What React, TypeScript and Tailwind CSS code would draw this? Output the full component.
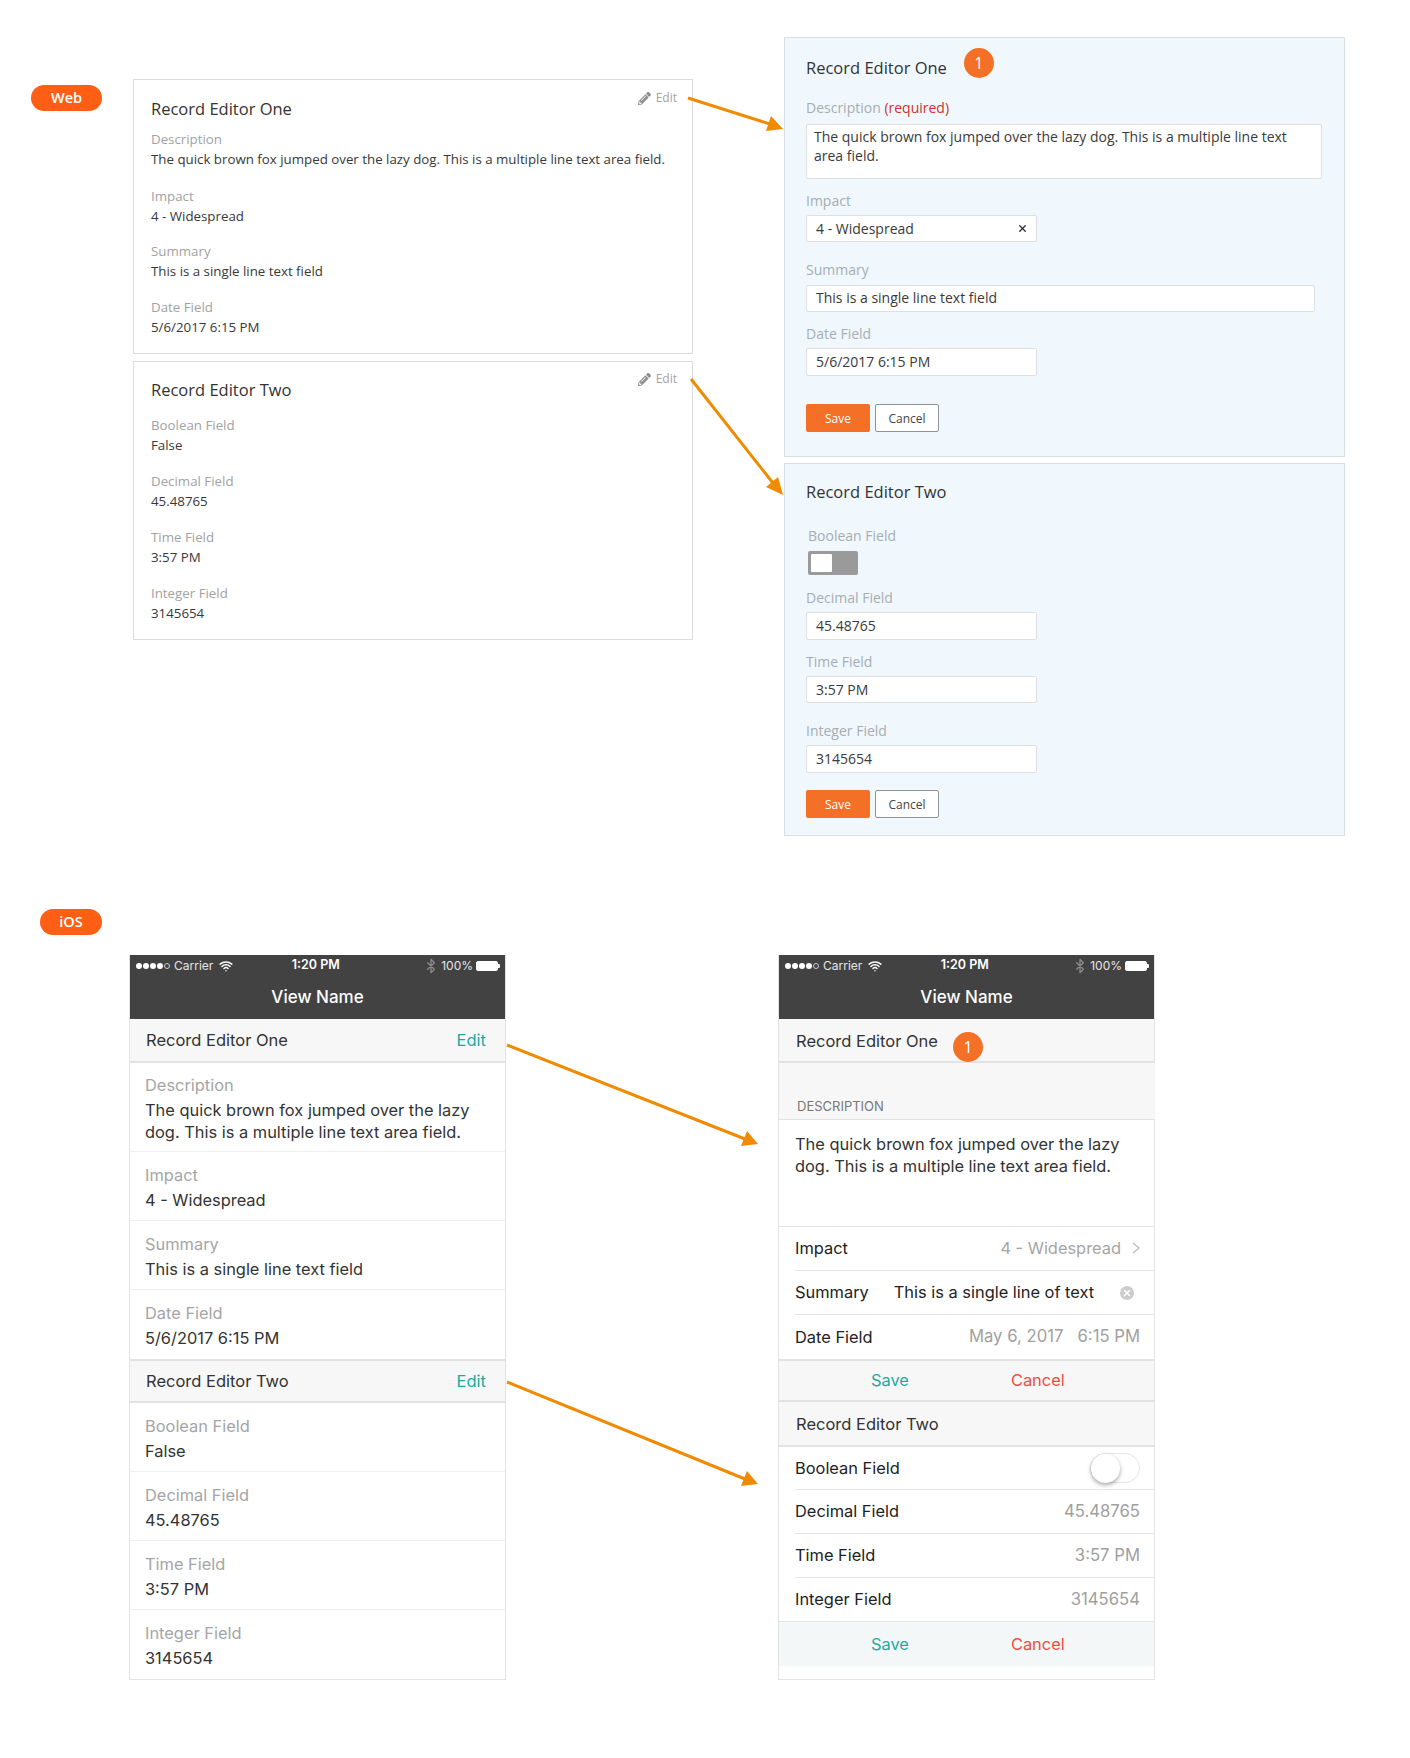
import { Wifi, Bluetooth, X } from 'lucide-react';
import { FaPencilAlt } from 'react-icons/fa';
import { clsx } from 'clsx';

const webFont = "font-['Open_Sans','Liberation_Sans',sans-serif]";
const iosFont = "font-['Inter','Liberation_Sans',sans-serif]";

function Badge({ label, className }: { label: string; className?: string }) {
  return (
    <div
      className={clsx(
        'flex h-[26px] items-center justify-center rounded-full bg-[#ff5f15] text-[14.5px] font-semibold text-white',
        className
      )}
    >
      {label}
    </div>
  );
}

function Count({ className }: { className?: string }) {
  return (
    <div
      className={clsx(
        'flex items-center justify-center rounded-full bg-[#f37026] text-[16px] text-white',
        className
      )}
    >
      1
    </div>
  );
}

function EditLink({ className }: { className?: string }) {
  return (
    <div className={clsx('absolute right-[15px] flex items-center gap-[5px] text-[12px] leading-4 text-[#a3a3a3]', className)}>
      <FaPencilAlt className="h-[13px] w-[13px] text-[#8f8f8f]" />
      Edit
    </div>
  );
}

function ReadField({ label, value, className }: { label: string; value: string; className?: string }) {
  return (
    <div className={className}>
      <div className="text-[13.3px] leading-5 text-[#a2a2a2]">{label}</div>
      <div className="text-[13.3px] leading-5 text-[#383838]">{value}</div>
    </div>
  );
}

function ReadCard({ title, children, className }: { title: string; children: React.ReactNode; className?: string }) {
  return (
    <div className={clsx('relative border border-[#dcdcdc] px-[17px]', className)}>
      <div className="text-[16.5px] leading-7 text-[#333]">{title}</div>
      {children}
    </div>
  );
}

function Input({ value, className, clear }: { value: string; className?: string; clear?: boolean }) {
  return (
    <div
      className={clsx(
        'flex items-center justify-between rounded-[2px] border border-[#dfdfdf] bg-white pl-[9px] pr-[8px] text-[14px] text-[#3a3a3a]',
        className
      )}
    >
      {value}
      {clear && <X className="h-[11px] w-[11px] text-[#333]" strokeWidth={3} />}
    </div>
  );
}

function FormLabel({ children, className }: { children: React.ReactNode; className?: string }) {
  return <div className={clsx('text-[14px] leading-5 text-[#a6adb2]', className)}>{children}</div>;
}

function FormButtons({ className }: { className?: string }) {
  return (
    <div className={clsx('flex h-7 gap-[5px] text-[12px]', className)}>
      <div className="flex w-[64px] items-center justify-center rounded-[2px] bg-[#f37026] pt-[2px] text-white">Save</div>
      <div className="flex w-[64px] items-center justify-center rounded-[2px] border border-[#8f9499] bg-white pt-[2px] text-[#444]">Cancel</div>
    </div>
  );
}

function StatusBar() {
  return (
    <div className="relative flex h-[21px] items-center pl-[6px] pr-[5px] text-[12px] text-[#e6e6e6]">
      <div className="flex items-center gap-[1px]">
        <span className="h-[6px] w-[6px] rounded-full bg-white" />
        <span className="h-[6px] w-[6px] rounded-full bg-white" />
        <span className="h-[6px] w-[6px] rounded-full bg-white" />
        <span className="h-[6px] w-[6px] rounded-full bg-white" />
        <span className="h-[6px] w-[6px] rounded-full border border-[#ccc]" />
      </div>
      <span className="ml-[4px]">Carrier</span>
      <Wifi className="ml-[6px] h-[14px] w-[14px] text-white" strokeWidth={2.5} />
      <span className="flex-1 pr-[25px] text-center text-[12.5px] font-semibold text-white">1:20 PM</span>
      <Bluetooth className="h-4 w-4 text-[#8a8a8a]" strokeWidth={2} />
      <span className="ml-[2px]">100%</span>
      <div className="ml-[3px] h-[10px] w-[22px] rounded-[2px] border border-white bg-white" />
      <div className="h-[4px] w-[2px] rounded-r-[1px] bg-white" />
    </div>
  );
}

function NavBar() {
  return (
    <div className="h-[64px] bg-[#424242]">
      <StatusBar />
      <div className="pt-[7px] text-center text-[17px] font-medium leading-7 text-white">View Name</div>
    </div>
  );
}

function ReadRow({ label, value, last }: { label: string; value: string; last?: boolean }) {
  return (
    <div className={clsx('h-[69px] pl-[15px] pt-[11px]', !last && 'border-b border-[#efefef]')}>
      <div className="text-[16.4px] leading-[25px] text-[#a5a5a5]">{label}</div>
      <div className="text-[16.4px] leading-[25px] text-[#333]">{value}</div>
    </div>
  );
}

function PhoneHeader({ title, edit, className }: { title: string; edit?: boolean; className?: string }) {
  return (
    <div className={clsx('flex items-center justify-between border-b-2 border-[#e2e2e2] bg-[#f7f7f7] pl-4 pr-[19px] text-[16.5px] text-[#333]', className)}>
      {title}
      {edit && <span className="text-[#1fa9a0]">Edit</span>}
    </div>
  );
}

function FormRow({ label, children, className, line = true }: { label: string; children?: React.ReactNode; className?: string; line?: boolean }) {
  return (
    <div className={clsx('pl-[16px]', className)}>
      <div className={clsx('flex h-full items-center justify-between pr-[14px] text-[16.4px] text-[#222]', line && 'border-b border-[#e6e6e6]')}>
        {label}
        {children}
      </div>
    </div>
  );
}

function PhoneActions({ className }: { className?: string }) {
  return (
    <div className={clsx('flex items-center gap-[102px] pl-[92px] text-[16.4px]', className)}>
      <span className="text-[#1fa9a0]">Save</span>
      <span className="text-[#ef4b3f]">Cancel</span>
    </div>
  );
}

export default function App() {
  return (
    <div className="relative h-[1758px] w-[1410px] overflow-hidden bg-white">
      {/* Web */}
      <div className={clsx('flex pt-[37px]', webFont)}>
        <Badge label="Web" className="ml-[31px] mt-[48px] w-[71px]" />

        <div className="ml-[31px] mt-[42px] flex w-[560px] flex-col gap-[7px]">
          <ReadCard title="Record Editor One" className="h-[275px] pt-[15px]">
            <EditLink className="top-[10px]" />
            <ReadField className="mt-[6px]" label="Description" value="The quick brown fox jumped over the lazy dog. This is a multiple line text area field." />
            <ReadField className="mt-[17px]" label="Impact" value="4 - Widespread" />
            <ReadField className="mt-[15px]" label="Summary" value="This is a single line text field" />
            <ReadField className="mt-[16px]" label="Date Field" value="5/6/2017 6:15 PM" />
          </ReadCard>
          <ReadCard title="Record Editor Two" className="h-[279px] pt-[14px]">
            <EditLink className="top-[9px]" />
            <ReadField className="mt-[11px]" label="Boolean Field" value="False" />
            <ReadField className="mt-[16px]" label="Decimal Field" value="45.48765" />
            <ReadField className="mt-[16px]" label="Time Field" value="3:57 PM" />
            <ReadField className="mt-[16px]" label="Integer Field" value="3145654" />
          </ReadCard>
        </div>

        <div className="ml-[91px] flex w-[561px] flex-col gap-[6px]">
          <div className="h-[420px] border border-[#d5dfe5] bg-[#f0f8fd] pl-[21px] pt-[16px]">
            <div className="flex h-7 items-center text-[16.5px] text-[#333]">
              Record Editor One
              <Count className="ml-[17px] h-[30px] w-[30px] -translate-y-[5px]" />
            </div>
            <FormLabel className="mt-[16px]">
              Description <span className="text-[#d0312d]">(required)</span>
            </FormLabel>
            <div className="mt-[6px] h-[55px] w-[516px] rounded-[2px] border border-[#dfdfdf] bg-white px-[7px] pt-[2px] text-[14px] leading-[19px] text-[#3a3a3a]">
              The quick brown fox jumped over the lazy dog. This is a multiple line text area field.
            </div>
            <FormLabel className="mt-[12px]">Impact</FormLabel>
            <Input className="mt-[4px] h-[27px] w-[231px]" value="4 - Widespread" clear />
            <FormLabel className="mt-[18px]">Summary</FormLabel>
            <Input className="mt-[5px] h-[27px] w-[509px] pb-[2px]" value="This is a single line text field" />
            <FormLabel className="mt-[12px]">Date Field</FormLabel>
            <Input className="mt-[4px] h-[28px] w-[231px] pb-[2px]" value="5/6/2017 6:15 PM" />
            <FormButtons className="mt-[28px]" />
          </div>

          <div className="h-[373px] border border-[#d5dfe5] bg-[#f0f8fd] pl-[21px] pt-[14px]">
            <div className="h-7 text-[16.5px] leading-7 text-[#333]">Record Editor Two</div>
            <FormLabel className="ml-[2px] mt-[20px]">Boolean Field</FormLabel>
            <div className="ml-[2px] mt-[5px] flex h-[24px] w-[50px] rounded-[2px] bg-[#9a9a9a] p-[3px]">
              <div className="h-full w-[21px] rounded-[1px] bg-white" />
            </div>
            <FormLabel className="mt-[13px]">Decimal Field</FormLabel>
            <Input className="mt-[4px] h-[28px] w-[231px] pb-[2px]" value="45.48765" />
            <FormLabel className="mt-[12px]">Time Field</FormLabel>
            <Input className="mt-[4px] h-[27px] w-[231px]" value="3:57 PM" />
            <FormLabel className="mt-[18px]">Integer Field</FormLabel>
            <Input className="mt-[4px] h-[28px] w-[231px] pb-[2px]" value="3145654" />
            <FormButtons className="mt-[17px]" />
          </div>
        </div>
      </div>

      {/* iOS */}
      <div className="mt-[73px]">
        <Badge label="iOS" className={clsx('ml-[40px] w-[62px]', webFont)} />
        <div className={clsx('ml-[129px] mt-[20px] flex gap-[272px]', iosFont)}>
          <div className="h-[725px] w-[377px] border-x border-b border-[#e3e3e3]">
            <NavBar />
            <PhoneHeader title="Record Editor One" edit className="h-[44px]" />
            <div className="h-[89px] border-b border-[#efefef] pl-[15px] pt-[9px]">
              <div className="mb-[1px] text-[16.4px] leading-[26px] text-[#a5a5a5]">Description</div>
              <div className="text-[16.4px] leading-[22px] text-[#333]">
                The quick brown fox jumped over the lazy
                <br />
                dog. This is a multiple line text area field.
              </div>
            </div>
            <ReadRow label="Impact" value="4 - Widespread" />
            <ReadRow label="Summary" value="This is a single line text field" />
            <ReadRow label="Date Field" value="5/6/2017 6:15 PM" last />
            <PhoneHeader title="Record Editor Two" edit className="h-[44px] border-t-2 pt-[1px]" />
            <ReadRow label="Boolean Field" value="False" />
            <ReadRow label="Decimal Field" value="45.48765" />
            <ReadRow label="Time Field" value="3:57 PM" />
            <ReadRow label="Integer Field" value="3145654" last />
          </div>

          <div className="h-[725px] w-[377px] border-x border-b border-[#e3e3e3]">
            <NavBar />
            <PhoneHeader title="Record Editor One" className="h-[44px] pl-[17px] pt-[2px]" />
            <div className="-mr-[1px] h-[57px] border-b border-[#e2e2e2] bg-[#f7f7f7] pl-[18px] pt-[33px] text-[13px] leading-5 text-[#777]">DESCRIPTION</div>
            <div className="h-[107px] border-b border-[#e6e6e6] pl-4 pt-[13px] text-[16.4px] leading-[22px] text-[#333]">
              The quick brown fox jumped over the lazy
              <br />
              dog. This is a multiple line text area field.
            </div>
            <FormRow label="Impact" className="h-[44px]">
              <span className="flex items-center gap-[11px] text-[#a5a5a5]">
                4 - Widespread
                <svg width={8} height={12} viewBox="0 0 8 12" fill="none" stroke="#bbb" strokeWidth={1.4}>
                  <path d="M1 1l6 5-6 5" />
                </svg>
              </span>
            </FormRow>
            <FormRow label="Summary" className="h-[44px]">
              <span className="ml-[25px] flex-1 text-[#222]">This is a single line of text</span>
              <span className="mr-[6px] flex h-[14px] w-[14px] items-center justify-center rounded-full bg-[#ccc]">
                <X className="h-[10px] w-[10px] text-white" strokeWidth={3.5} />
              </span>
            </FormRow>
            <FormRow label="Date Field" className="h-[44px]" line={false}>
              <span className="text-[16.7px] text-[#a0a0a0]">May 6, 2017&nbsp;&nbsp;&nbsp;6:15 PM</span>
            </FormRow>
            <PhoneActions className="h-[43px] border-y-2 border-[#e2e2e2] bg-[#f7f7f7]" />
            <PhoneHeader title="Record Editor Two" className="h-[45px] pl-[17px] pt-[2px]" />
            <FormRow label="Boolean Field" className="h-[43px]">
              <span className="flex h-[30px] w-[50px] rounded-full border border-[#e6e6e6] bg-white">
                <span className="h-[29px] w-[29px] rounded-full bg-white shadow-[0_2px_4px_rgba(0,0,0,0.35)]" />
              </span>
            </FormRow>
            <FormRow label="Decimal Field" className="h-[44px]">
              <span className="text-[16.7px] text-[#a0a0a0]">45.48765</span>
            </FormRow>
            <FormRow label="Time Field" className="h-[44px]">
              <span className="text-[16.7px] text-[#a0a0a0]">3:57 PM</span>
            </FormRow>
            <FormRow label="Integer Field" className="h-[43px]" line={false}>
              <span className="text-[16.7px] text-[#a0a0a0]">3145654</span>
            </FormRow>
            <PhoneActions className="h-[45px] border-t border-[#e2e2e2] bg-[#f4f7f8]" />
          </div>
        </div>
      </div>

      {/* Count badge over the iOS editor header */}
      <Count className={clsx('absolute left-[953px] top-[1032px] h-[30px] w-[30px]', webFont)} />

      {/* Annotation arrows */}
      <svg className="pointer-events-none absolute left-0 top-0" width={1410} height={1758} fill="#f08a00" stroke="none">
        <line x1={688} y1={98} x2={770} y2={124} stroke="#f08a00" strokeWidth={3} />
        <polygon points="783,129 766,131 771,116" />
        <line x1={691} y1={379} x2={773} y2={483} stroke="#f08a00" strokeWidth={3} />
        <polygon points="783,495 766,487 778,477" />
        <line x1={507} y1={1045} x2={745} y2={1139} stroke="#f08a00" strokeWidth={3} />
        <polygon points="758,1144 741,1146 747,1131" />
        <line x1={507} y1={1382} x2={745} y2={1479} stroke="#f08a00" strokeWidth={3} />
        <polygon points="758,1484 741,1486 747,1471" />
      </svg>
    </div>
  );
}
